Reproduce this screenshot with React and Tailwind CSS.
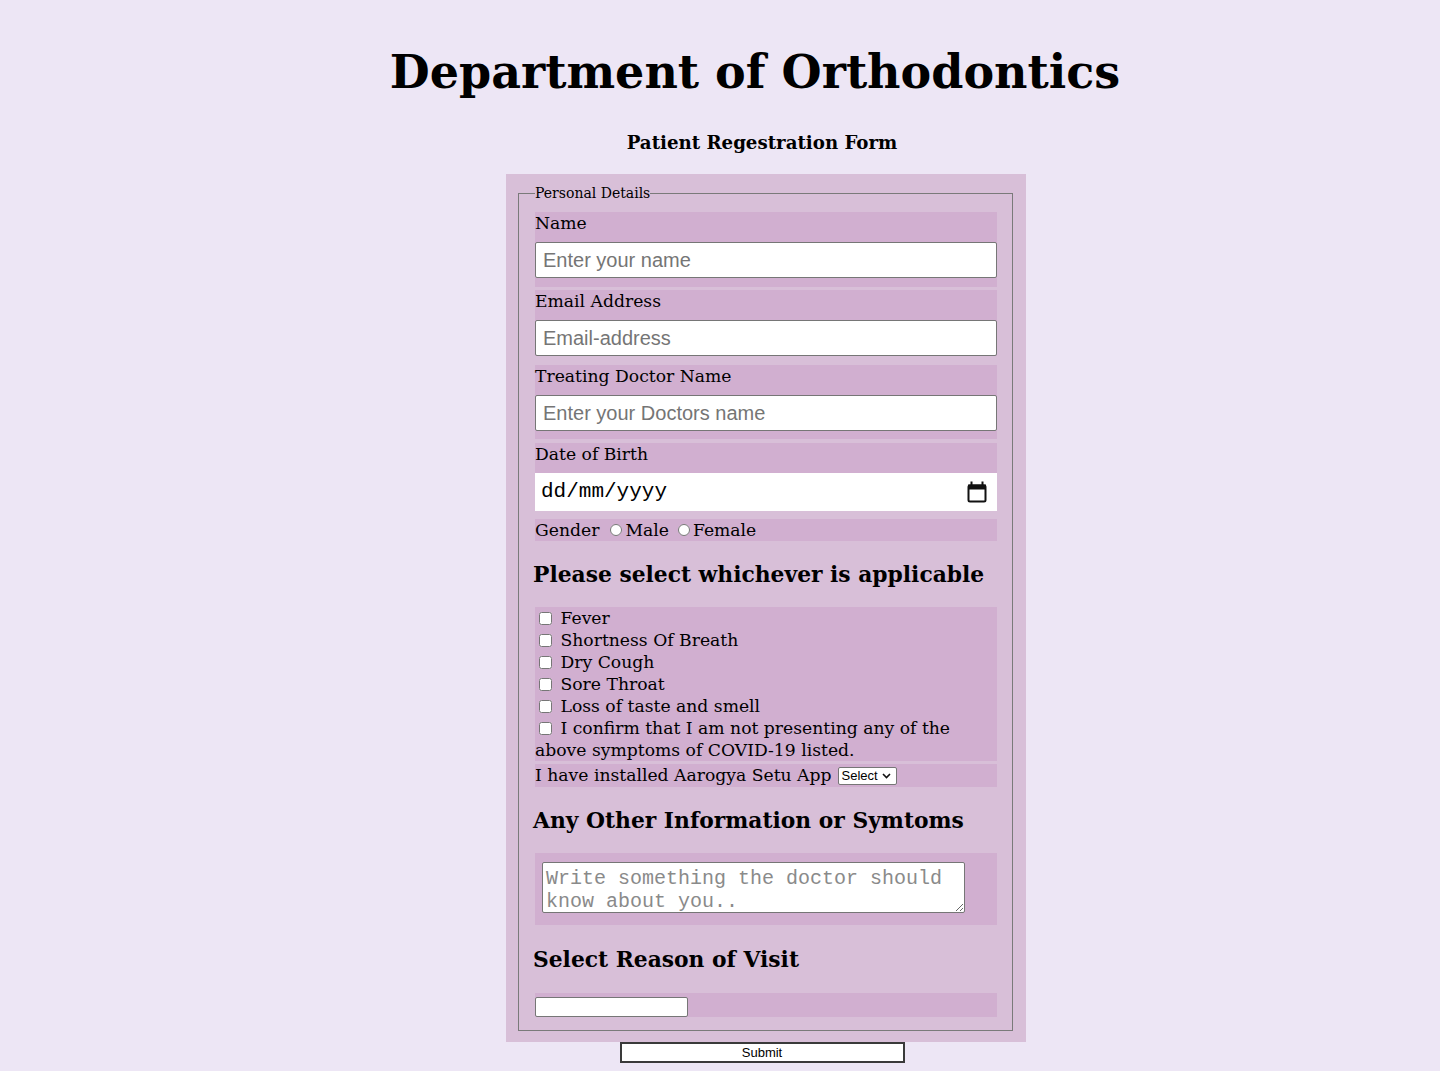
import React from 'react'

const rowBg = 'bg-[#d1afd0]'

const TextField = ({ label, placeholder, className = '' }) => (
  <div className={`${rowBg} ${className}`}>
    <div className="leading-[23px]">{label}</div>
    <input
      type="text"
      placeholder={placeholder}
      className="mt-[7px] block w-full h-[36px] bg-white border border-[#767676] rounded-[2px] px-[7px] font-['Liberation_Sans',sans-serif] text-[20px] text-black placeholder:text-[#757575] outline-none"
    />
  </div>
)

const CalendarIcon = () => (
  <svg width="20" height="22" viewBox="0 0 20 22">
    <rect x="1.5" y="4.5" width="17" height="16" rx="1.5" fill="none" stroke="#111" strokeWidth="2" />
    <rect x="1" y="3.5" width="18" height="5" fill="#111" />
    <rect x="3.5" y="0.5" width="2" height="4" fill="#111" />
    <rect x="14.5" y="0.5" width="2" height="4" fill="#111" />
  </svg>
)

const symptoms = ['Fever', 'Shortness Of Breath', 'Dry Cough', 'Sore Throat', 'Loss of taste and smell']

const Heading = ({ children, className = '' }) => (
  <h2 className={`-ml-[2px] text-[21.8px] font-bold leading-[28px] ${className}`}>{children}</h2>
)

export default function App() {
  return (
    <div className="min-h-screen bg-[#ede6f5] font-['DejaVu_Serif',serif] text-[17.2px] text-black">
      <div className="flex flex-col items-center pl-[84px] pt-[44px]">
        <h1 className="mr-[14px] text-[46px] font-bold leading-[56px]">Department of Orthodontics</h1>
        <h3 className="mt-[31px] text-[18.2px] font-bold leading-[24px]">Patient Regestration Form</h3>

        <form className="mt-[19px] ml-[8px] w-[520px] bg-[#d8bfd8] pl-3 pr-[13px] pt-[10px] pb-[11px]">
          <fieldset className="border border-[#7a7a7a] pl-4 pr-[15px] pt-[10px] pb-[13px]">
            <legend className="text-[14px] leading-[18px]">Personal Details</legend>

            <TextField label="Name" placeholder="Enter your name" className="pb-[9px]" />
            <TextField label="Email Address" placeholder="Email-address" className="mt-[3px]" />
            <TextField label="Treating Doctor Name" placeholder="Enter your Doctors name" className="mt-[9px] pb-[8px]" />

            {/* date of birth */}
            <div className={`${rowBg} mt-[4px]`}>
              <div className="leading-[23px]">Date of Birth</div>
              <div className="mt-[7px] h-[38px] bg-white flex items-center justify-between pl-[6px] pr-[10px]">
                <span className="font-['Liberation_Mono',monospace] text-[21px]">dd/mm/yyyy</span>
                <CalendarIcon />
              </div>
            </div>

            <div className={`${rowBg} mt-[8px] h-[22px] leading-[22px] flex items-center`}>
              <span>Gender</span>
              <input type="radio" name="g" className="ml-[11px] mr-[3px] w-[12px] h-[12px]" />
              <span>Male</span>
              <input type="radio" name="g" className="ml-[9px] mr-[3px] w-[12px] h-[12px]" />
              <span>Female</span>
            </div>

            <Heading className="mt-5 mb-[18px]">Please select whichever is applicable</Heading>

            <div className={`${rowBg} leading-[22px]`}>
              {symptoms.map((s) => (
                <div key={s}>
                  <input type="checkbox" className="relative -top-px align-middle ml-[4px] mr-[3px] my-[3px] w-[13px] h-[13px]" /> {s}
                </div>
              ))}
              <div>
                <input type="checkbox" className="relative -top-px align-middle ml-[4px] mr-[3px] my-[3px] w-[13px] h-[13px]" /> I confirm that I am not presenting any of the
                <br />
                above symptoms of COVID-19 listed.
              </div>
            </div>

            <div className={`${rowBg} mt-[3px] h-[23px] leading-[23px] flex items-center`}>
              <span>I have installed Aarogya Setu App</span>
              <div className="ml-[6px] h-[18px] w-[59px] bg-white border border-[#767676] rounded-[2px] flex items-center pl-[3px] gap-[4px] font-['Liberation_Sans',sans-serif] text-[13px] leading-none">
                <span>Select</span>
                <svg width="9" height="6" viewBox="0 0 9 6">
                  <path d="M1 1l3.5 3.5L8 1" fill="none" stroke="#111" strokeWidth="1.6" />
                </svg>
              </div>
            </div>

            <Heading className="mt-5 mb-[18px]">Any Other Information or Symtoms</Heading>

            <div className={`${rowBg} pt-[9px] pl-[7px] pb-[12px]`}>
              <textarea
                placeholder="Write something the doctor should know about you.."
                className="block w-[423px] h-[51px] bg-white border border-[#767676] rounded-[2px] px-[3px] pt-[4px] font-['Liberation_Mono',monospace] text-[20px] leading-[23px] placeholder:text-[#8a8a8a] outline-none resize overflow-hidden"
              />
            </div>

            <Heading className="mt-[21px] mb-[19px]">Select Reason of Visit</Heading>

            <div className={`${rowBg} pt-[4px] h-[24px]`}>
              <div className="w-[153px] h-[20px] bg-white border border-[#767676] rounded-[2px]" />
            </div>
          </fieldset>
        </form>

        <button
          type="button"
          className="w-[285px] h-[21px] bg-white border-2 border-[#3a3a3a] font-['Liberation_Sans',sans-serif] text-[13px] leading-none"
        >
          Submit
        </button>
      </div>
    </div>
  )
}
